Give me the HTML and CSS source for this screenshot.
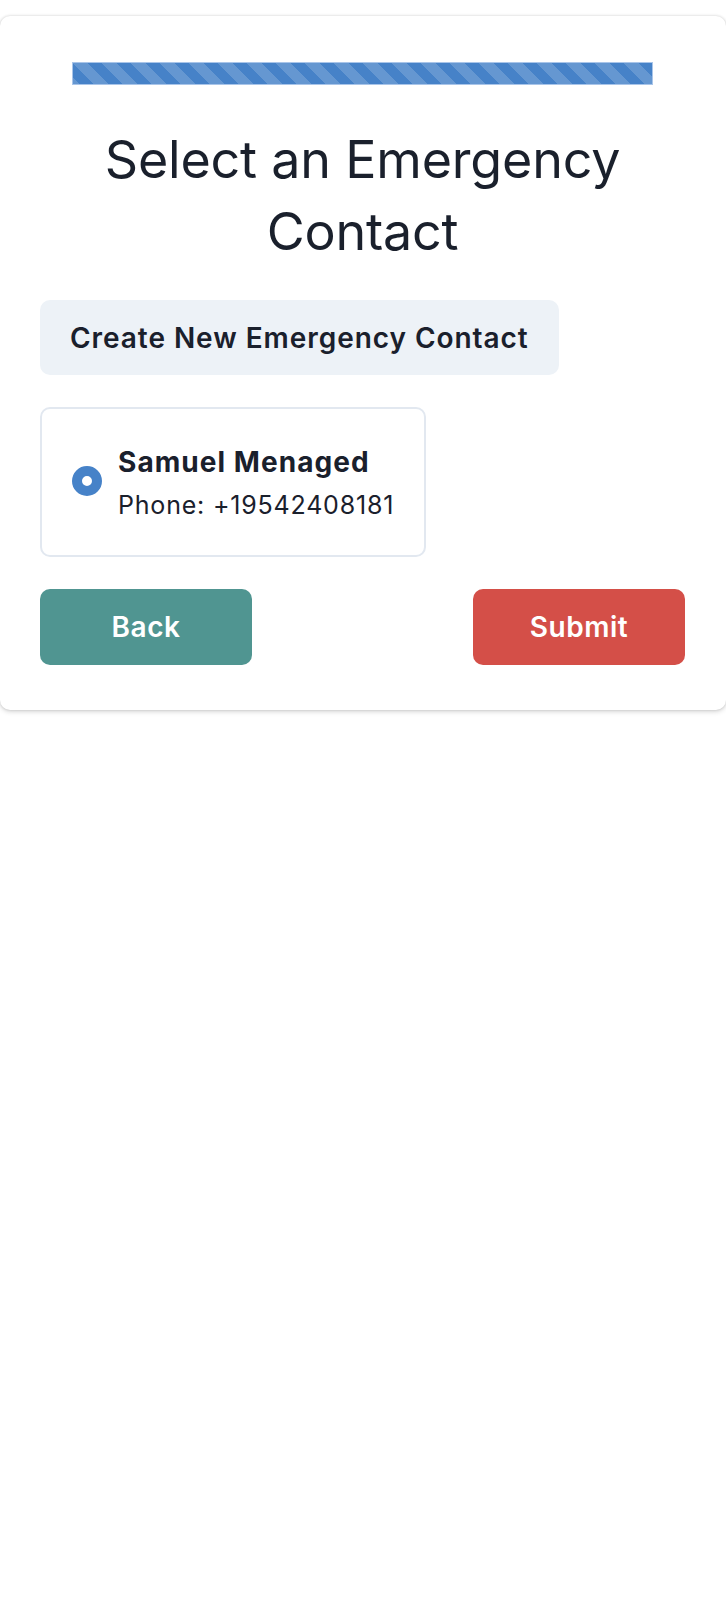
FILE: index.html
```html
<!DOCTYPE html>
<html lang="en">
<head>
  <meta charset="UTF-8" />
  <meta name="viewport" content="width=device-width, initial-scale=1.0"/>
  <title>Select an Emergency Contact</title>
  <link rel="stylesheet" href="styles.css">
</head>
<body>

<div class="panel">
  <div class="progress"><div class="progress-fill"></div></div>

  <h1>Select an Emergency Contact</h1>

  <button class="btn-create">Create New Emergency Contact</button>

  <label class="contact-card">
    <span class="radio"></span>
    <span class="contact-info">
      <span class="contact-name">Samuel Menaged</span>
      <span class="contact-phone">Phone: +19542408181</span>
    </span>
  </label>

  <div class="actions">
    <button class="btn btn-back">Back</button>
    <button class="btn btn-submit">Submit</button>
  </div>
</div>

</body>
</html>
```

FILE: styles.css
```css
* {
  box-sizing: border-box;
  font-family: 'Inter', 'Noto Sans', sans-serif;
}
body {
  margin: 0;
  background: #fff;
  color: #1a202c;
  min-height: 1600px;
}
.panel {
  margin-top: 16px;
  background: #fff;
  border-radius: 10px;
  padding: 46px 41px 45px 40px;
  box-shadow: 0 0 3px rgba(0,0,0,0.16), 0 2px 5px rgba(0,0,0,0.14);
}
.progress {
  width: 90%;
  height: 23px;
  margin: 0 auto;
  border: 1px solid #a9c5e9;
  background: #a9c5e9;
}
.progress-fill {
  width: 100%;
  height: 100%;
  background-color: #4682c8;
  background-image: linear-gradient(45deg, rgba(255,255,255,0.17) 25%, transparent 25%, transparent 50%, rgba(255,255,255,0.17) 50%, rgba(255,255,255,0.17) 75%, transparent 75%, transparent);
  background-size: 29px 29px;
}
h1 {
  margin: 39px 0 32px;
  font-size: 52px;
  line-height: 72px;
  font-weight: 400;
  text-align: center;
  letter-spacing: -0.2px;
}
.btn-create {
  display: flex;
  align-items: center;
  height: 75px;
  padding: 0 30px;
  border: none;
  border-radius: 10px;
  background: #edf2f7;
  color: #1a202c;
  font-size: 28px;
  font-weight: 600;
  letter-spacing: 0.95px;
}
.contact-card {
  display: flex;
  align-items: center;
  gap: 16px;
  width: fit-content;
  margin-top: 32px;
  padding: 33px 30px 30px 30px;
  border: 2px solid #e2e8f0;
  border-radius: 10px;
}
.radio {
  width: 30px;
  height: 30px;
  margin-bottom: 5px;
  border-radius: 50%;
  border: 10px solid #4682c8;
  background: #fff;
  flex-shrink: 0;
}
.contact-info {
  display: flex;
  flex-direction: column;
}
.contact-name {
  font-size: 28px;
  font-weight: 700;
  line-height: 40px;
  letter-spacing: 1.05px;
}
.contact-phone {
  margin-top: 3px;
  font-size: 25px;
  line-height: 40px;
  letter-spacing: 0.8px;
}
.actions {
  display: flex;
  justify-content: space-between;
  margin-top: 32px;
}
.btn {
  width: 212px;
  height: 76px;
  border: none;
  border-radius: 10px;
  color: #fff;
  font-size: 28px;
  font-weight: 600;
  letter-spacing: 0.5px;
}
.btn-back {
  background: #509591;
}
.btn-submit {
  background: #d44f48;
}
```
